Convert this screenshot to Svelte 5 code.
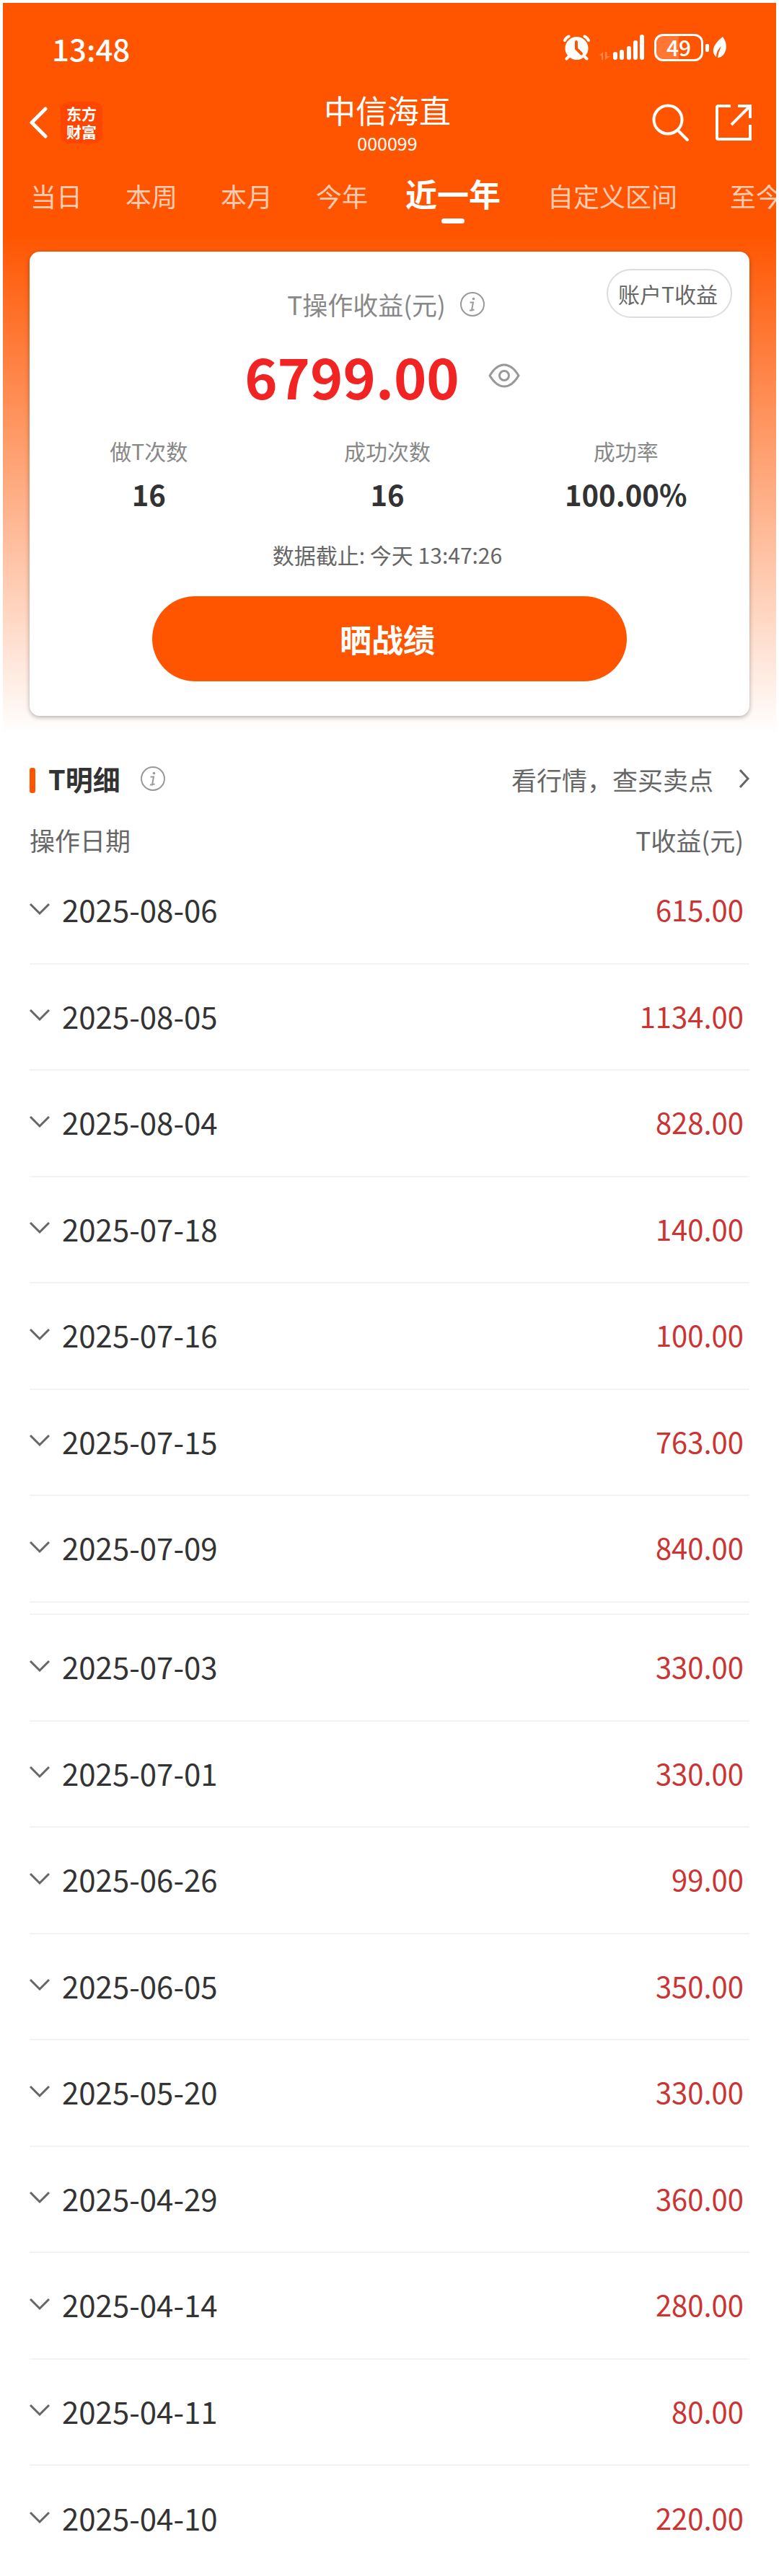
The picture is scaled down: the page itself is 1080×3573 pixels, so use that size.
<script>
    const tabs = [
        { label: '当日' },
        { label: '本周' },
        { label: '本月' },
        { label: '今年' },
        { label: '近一年' },
        { label: '自定义区间', wide: true },
        { label: '至今' }
    ];

    const stats = [
        { label: '做T次数', value: '16' },
        { label: '成功次数', value: '16' },
        { label: '成功率', value: '100.00%' }
    ];

    const pages = [
        [
            { date: '2025-08-06', profit: '615.00' },
            { date: '2025-08-05', profit: '1134.00' },
            { date: '2025-08-04', profit: '828.00' },
            { date: '2025-07-18', profit: '140.00' },
            { date: '2025-07-16', profit: '100.00' },
            { date: '2025-07-15', profit: '763.00' },
            { date: '2025-07-09', profit: '840.00' }
        ],
        [
            { date: '2025-07-03', profit: '330.00' },
            { date: '2025-07-01', profit: '330.00' },
            { date: '2025-06-26', profit: '99.00' },
            { date: '2025-06-05', profit: '350.00' },
            { date: '2025-05-20', profit: '330.00' },
            { date: '2025-04-29', profit: '360.00' },
            { date: '2025-04-14', profit: '280.00' },
            { date: '2025-04-11', profit: '80.00' },
            { date: '2025-04-10', profit: '220.00' }
        ]
    ];

    let activeTab = $state('近一年');
    let hidden = $state(false);
</script>

{#snippet infoIcon()}
    <svg width="34" height="34" viewBox="0 0 34 34" fill="none" stroke="#999" stroke-width="2">
        <circle cx="17" cy="17" r="16" />
        <circle cx="18.500" cy="9.500" r="1.800" fill="#999" stroke="none" />
        <path d="M13.500 14.500H18L16.300 23.500Q16 25.500 19.500 24.500M13 25.500H17" />
    </svg>
{/snippet}

<div class="page">
    <header class="hero">
        <div class="status_bar">
            <span class="clock">13:48</span>
            <div class="status_icons">
                <svg width="38" height="36" viewBox="0 0 38 36" fill="none" stroke="#fff" stroke-linecap="round">
                    <circle cx="18.500" cy="19" r="16" fill="#fff" stroke="none" />
                    <path d="M2 8Q3.500 4.500 7.500 2.500M35 8Q33.500 4.500 29.500 2.500" stroke-width="4" />
                    <path d="M7 31L4.500 33.500M30 31L32.500 33.500" stroke-width="4" />
                    <path d="M18 10V19.500L25 26.500" stroke="#f50" stroke-width="4" />
                </svg>
                <svg class="signal" width="64" height="36" viewBox="0 0 64 36" fill="#fff">
                    <path d="M5 35V24L0 29H3V35ZM8 24V35L15 30H10.500V24Z" opacity="0.300" />
                    <rect x="19" y="24" width="6" height="11" rx="3" />
                    <rect x="28" y="21" width="6" height="14" rx="3" />
                    <rect x="38" y="16" width="6" height="19" rx="3" />
                    <rect x="47" y="8" width="6" height="27" rx="3" />
                    <rect x="56" y="0" width="6" height="35" rx="3" />
                </svg>
                <div class="battery">49</div>
                <svg width="30" height="32" viewBox="0 0 30 32" fill="#fff">
                    <rect x="0" y="11" width="5" height="11" rx="2" />
                    <path d="M24 1Q31 11 28 20Q25 29 18 30L17 30Q18 22 22 14Q15 20 15 29Q10 25 11 18Q13 9 24 1Z" />
                </svg>
            </div>
        </div>

        <nav class="title_bar">
            <div class="title_left">
                <button class="icon_button" aria-label="返回">
                    <svg width="26" height="44" viewBox="0 0 26 44" fill="none" stroke="#fff" stroke-width="5" stroke-linecap="round" stroke-linejoin="round">
                        <path d="M23 3L4 22L23 41" />
                    </svg>
                </button>
                <span class="brand">东方<br />财富</span>
            </div>
            <div class="title_center">
                <h1>中信海直</h1>
                <span>000099</span>
            </div>
            <div class="title_right">
                <button class="icon_button" aria-label="搜索">
                    <svg width="52" height="52" viewBox="0 0 52 52" fill="none" stroke="#fff" stroke-width="4" stroke-linecap="round">
                        <circle cx="22" cy="22" r="19.500" />
                        <path d="M36 37L49 50" />
                    </svg>
                </button>
                <button class="icon_button" aria-label="分享">
                    <svg width="50" height="52" viewBox="0 0 50 52" fill="none" stroke="#fff" stroke-width="4">
                        <path d="M21 3H4Q2 3 2 5V47Q2 49 4 49H48V29" />
                        <path d="M31 3H48V20M48 3L22 29" />
                    </svg>
                </button>
            </div>
        </nav>

        <div class="tabs">
            {#each tabs as tab}
                <button class="tab" class:wide={tab.wide} class:active={tab.label === activeTab} onclick={() => activeTab = tab.label}>
                    {tab.label}
                </button>
            {/each}
        </div>

        <section class="card">
            <button class="account_button">账户T收益</button>
            <div class="card_title">
                <span>T操作收益(元)</span>
                {@render infoIcon()}
            </div>
            <div class="total">
                <strong>{hidden ? '****' : '6799.00'}</strong>
                <button class="icon_button" aria-label="隐藏金额" onclick={() => hidden = !hidden}>
                    <svg width="44" height="34" viewBox="0 0 44 34" fill="none" stroke="#999" stroke-width="3">
                        <path d="M2 17Q11 2 22 2Q33 2 42 17Q33 32 22 32Q11 32 2 17Z" stroke-linejoin="round" />
                        <circle cx="22" cy="17" r="6.500" />
                    </svg>
                </button>
            </div>
            <dl class="stats">
                {#each stats as stat}
                    <div>
                        <dt>{stat.label}</dt>
                        <dd>{stat.value}</dd>
                    </div>
                {/each}
            </dl>
            <p class="updated">数据截止: 今天 13:47:26</p>
            <button class="share_button">晒战绩</button>
        </section>
    </header>

    <main class="details">
        <div class="details_head">
            <h2>T明细</h2>
            {@render infoIcon()}
            <a href="#quotes">
                看行情，查买卖点
                <svg width="14" height="26" viewBox="0 0 14 26" fill="none" stroke="#666" stroke-width="3">
                    <path d="M1 1L12 13L1 25" />
                </svg>
            </a>
        </div>

        <table>
            <thead>
                <tr>
                    <th>操作日期</th>
                    <th class="profit">T收益(元)</th>
                </tr>
            </thead>
            {#each pages as records}
                <tbody>
                    {#each records as record}
                        <tr>
                            <td>
                                <button class="date_button">
                                    <svg width="28" height="17" viewBox="0 0 28 17" fill="none" stroke="#666" stroke-width="3">
                                        <path d="M1 1L14 14L27 1" />
                                    </svg>
                                    {record.date}
                                </button>
                            </td>
                            <td class="profit">{record.profit}</td>
                        </tr>
                    {/each}
                </tbody>
            {/each}
        </table>
    </main>
</div>

<style>
    :global(body) {
        margin: 0;
        background: #fff;
    }

    .page {
        padding: 4px;
        overflow: hidden;
        font-family: "Noto Sans CJK SC", sans-serif;
        color: #333;
    }

    svg {
        display: block;
        flex: none;
    }

    button {
        padding: 0;
        border: none;
        background: none;
        font: inherit;
        color: inherit;
        cursor: pointer;
    }

    h1, h2, p, dl, dd {
        margin: 0;
    }

    .hero {
        padding-bottom: 24px;
        background: linear-gradient(#f50 320px, #fff 100%);
        color: #fff;
    }

    .status_bar {
        display: flex;
        align-items: center;
        justify-content: space-between;
        height: 60px;
        padding: 32px 68px 0;
    }

    .clock {
        font-size: 42px;
        font-weight: 500;
    }

    .status_icons {
        display: flex;
        align-items: center;
    }

    .signal {
        margin: 0 12px;
    }

    .battery {
        box-sizing: border-box;
        width: 68px;
        height: 38px;
        margin-right: 3px;
        border: 3px solid #fff;
        border-radius: 12px;
        background: linear-gradient(90deg, #ff7733 50%, transparent 50%);
        font-size: 30px;
        font-weight: 500;
        line-height: 30px;
        text-align: center;
    }

    .title_bar {
        display: grid;
        grid-template-columns: 1fr auto 1fr;
        align-items: center;
        height: 124px;
        padding: 12px 34px 0 36px;
    }

    .title_left, .title_right {
        display: flex;
        align-items: center;
        gap: 18px;
    }

    .title_right {
        justify-content: flex-end;
        gap: 36px;
    }

    .brand {
        width: 58px;
        padding: 4px 0;
        border-radius: 12px;
        background: #ff4600;
        font-size: 21px;
        font-weight: 700;
        line-height: 25px;
        text-align: center;
    }

    .title_center {
        display: flex;
        flex-direction: column;
        align-items: center;
        padding-right: 8px;
        font-size: 25px;
        line-height: 36px;
    }

    h1 {
        font-size: 44px;
        font-weight: 400;
        line-height: 56px;
    }

    .tabs {
        display: flex;
        align-items: baseline;
        height: 117px;
        margin-left: 8px;
        overflow: hidden;
    }

    .tab {
        flex: none;
        width: 132px;
        padding-top: 4px;
        font-size: 36px;
        line-height: 64px;
        white-space: nowrap;
        color: #ffccb3;
    }

    .tab.wide {
        width: 266px;
    }

    .tab.active {
        width: 176px;
        font-size: 44px;
        font-weight: 700;
        color: #fff;
    }

    .tab.active::after {
        content: '';
        display: block;
        width: 32px;
        height: 7px;
        margin: 3px auto 0;
        border-radius: 4px;
        background: #fff;
    }

    .card {
        position: relative;
        display: flex;
        flex-direction: column;
        align-items: center;
        margin: 0 37px;
        padding: 48px 0;
        border-radius: 14px;
        background: #fff;
        box-shadow: 0 2px 6px rgba(0, 0, 0, 0.3);
        color: #333;
    }

    .account_button {
        position: absolute;
        top: 24px;
        right: 24px;
        padding: 0 18px 0 14px;
        border: 2px solid #ddd;
        border-radius: 34px;
        font-size: 30px;
        line-height: 64px;
        color: #666;
    }

    .card_title {
        display: flex;
        align-items: center;
        gap: 20px;
        padding-right: 10px;
        font-size: 35px;
        line-height: 50px;
        color: #888;
    }

    .total {
        display: flex;
        align-items: center;
        gap: 40px;
        margin-top: 14px;
        padding-right: 20px;
    }

    .total strong {
        font-size: 77px;
        line-height: 120px;
        color: #f22323;
    }

    .stats {
        display: flex;
        align-self: stretch;
        padding-right: 6px;
        margin-top: 22px;
        text-align: center;
    }

    .stats div {
        flex: 1;
    }

    dt {
        font-size: 30px;
        line-height: 44px;
        color: #888;
    }

    dd {
        margin-top: 8px;
        font-size: 40px;
        font-weight: 700;
        line-height: 60px;
    }

    .updated {
        margin-top: 32px;
        padding-right: 6px;
        font-size: 30px;
        line-height: 44px;
        color: #666;
    }

    .share_button {
        width: 66%;
        margin-top: 36px;
        padding-right: 6px;
        border-radius: 60px;
        background: #f50;
        font-size: 44px;
        font-weight: 700;
        line-height: 118px;
        color: #fff;
    }

    .details {
        padding: 33px 37px 0;
    }

    .details_head {
        display: flex;
        align-items: center;
        height: 60px;
    }

    h2 {
        margin-right: 28px;
        font-size: 38px;
        line-height: 60px;
    }

    h2::before {
        content: '';
        display: inline-block;
        width: 8px;
        height: 35px;
        margin-right: 18px;
        border-radius: 3px;
        background: #f50;
        vertical-align: -4px;
    }

    .details_head a {
        display: flex;
        align-items: center;
        gap: 36px;
        margin-left: auto;
        font-size: 35px;
        text-decoration: none;
        color: #666;
    }

    table {
        width: 100%;
        border-spacing: 0;
    }

    th {
        height: 80px;
        padding: 0;
        font-size: 35px;
        font-weight: 400;
        line-height: 50px;
        text-align: left;
        vertical-align: bottom;
        color: #666;
    }

    td {
        box-sizing: border-box;
        height: 148px;
        padding: 0 0 4px;
        border-bottom: 2px solid #f3f3f3;
        font-size: 40px;
        line-height: 60px;
    }

    tr:nth-child(even) td {
        height: 147px;
    }

    tbody + tbody::before {
        content: '';
        display: table-row;
        height: 15px;
    }

    tbody + tbody tr:first-child td {
        height: 150px;
        border-top: 2px solid #f3f3f3;
    }

    tbody:last-child tr:last-child td {
        border-bottom: none;
    }

    th.profit, td.profit {
        padding-right: 8px;
        text-align: right;
    }

    td.profit {
        color: #cc3333;
    }

    .date_button {
        display: flex;
        align-items: center;
        gap: 17px;
        font-size: 42px;
    }
</style>
